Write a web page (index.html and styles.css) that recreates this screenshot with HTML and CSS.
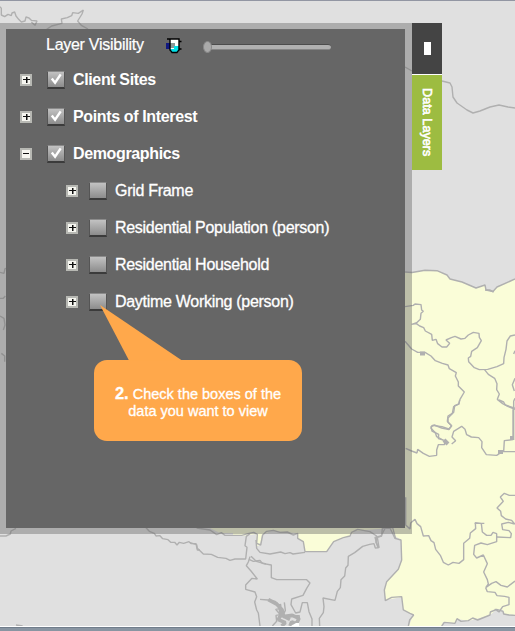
FILE: index.html
```html
<!DOCTYPE html>
<html lang="en">
<head>
<meta charset="utf-8">
<title>Data Layers</title>
<link rel="stylesheet" href="styles.css">
</head>
<body>
<svg class="map" viewBox="0 0 515 631" width="515" height="631">
  <g class="land">
    <path d="M405 272L412 272.5L425 270.3L437 270.7L447 275L450 279L462 282L476 288L485 285L486 290L493 291.5L497 287L515 279V615L505 614L503 610L497 609L490 615L480 618L468 621L458 619L455 623L443 622L442 626H409L413 615L403 610L402 597L386 600L384 590L387 581L398 570L402 560L401 540L395 536L390 528L355 531L350 536L333 542L327 551H305L303 542L298 538L296 533L271 531L262 535L260 545L257 546L256 534L242 536L233 535V533L220 533L210 528V500H405Z"/>
  </g>
  <g class="borders">
    <path d="M405 272L412 272.5L425 270.3L437 270.7L447 275L450 279L462 282L476 288L485 285L486 290L493 291.5L497 287L515 279"/>
    <path d="M442 81L450 83L452 87L453 97L457 103L467 110L473 113L480 111L490 107L499 105L508 107L515 108M405 67L412 71"/>
    <g transform="scale(.33333)">
      <path d="M0 20L4 25L4 45L14 50L24 43L34 47L36 39L44 36L48 48L56 58L64 66L75 63L78 51L87 54L94 61L111 63L105 76L94 66M140 88L155 78L186 70L184 57L202 53L215 47L218 38L235 40L250 30L246 42L233 63L244 76L264 87"/>
      <path d="M1315 1560M1315 1584M0 1608H18L31 1602L33 1593L48 1585M1 1608M438 1583L448 1594L463 1600L468 1608L480 1607L488 1616L504 1619L512 1627L524 1627L531 1635L538 1627L551 1630L567 1625L574 1631L588 1631L592 1650H600M48 1875L68 1878M0 817L12 820L15 806L19 805M0 895H10L16 888M0 948L12 955L15 975L10 990M4 1060L14 1068V1085"/>
    </g>
    <g transform="translate(405 290) scale(.33333)">
      <path d="M0 50L25 46L30 42L48 44L50 60L55 64L48 70L46 88L35 98L20 103L34 101L44 108L56 113L61 123L80 133L82 151L93 148L98 161L111 171L125 171L134 160L123 150L139 143L150 139L168 147L180 145L190 135L205 127L222 130L223 142L229 152L217 173L200 184L197 199L190 204L191 215L208 233L223 239L248 238L276 230L296 221L297 203L303 178L306 153L316 138L330 135"/>
      <path d="M0 154L20 177L38 187H60L78 198L91 212L112 220L129 225L133 236L154 248L151 258L160 276V288L178 306L165 328L161 342L146 350L142 370L129 378L127 394L140 408L131 417L111 410L82 406L78 415L91 428L95 440L114 450"/>
      <path d="M238 238L250 253L269 265L276 281L275 299L283 312L277 328L293 341L310 350L330 358M330 182L326 192M330 265L322 284L328 303M330 325L326 334L326 450"/>
      <path d="M240 0H254L266 6"/>
    </g>
    <g transform="translate(375 400) scale(.33333)">
      <path d="M254 0L252 12L239 17L236 37L219 54L219 67L230 77L222 89L200 84L178 75L168 80L171 93L191 103L190 116L208 121L209 134H190L185 150V166L163 169L145 160L128 148L126 159L110 153L92 145"/>
      <path d="M230 132L242 122L231 111L236 94L260 79L270 88L275 104L289 111L311 113L321 125L320 143L334 164L365 166L382 155L420 155M372 0L386 6L391 15L420 25M414 28V119L388 122L386 155"/>
      <path d="M92 292V375L105 387L107 369L120 358L126 371L137 380L145 408L161 407L168 422L177 428L182 448L196 466L205 487L220 495L234 487L252 490L266 479V430L284 415L286 399L302 386L301 368L319 371L322 396L335 406H348L354 397L365 401V425L337 434L318 429L299 436L296 463L305 474L325 465L337 491L326 516L337 539L340 552L332 563L350 550L363 545L378 556L397 561L420 543"/>
      <path d="M420 286H403L388 280L376 291L385 304L366 324L377 334L379 347L392 357L410 361L419 372L400 367L380 372L383 389L402 392L409 401L407 413L366 411M299 370H328"/>
      <path d="M45 384L60 415L78 420L80 480L70 508L35 545L28 570L31 602L50 592L80 590L85 630L105 640L116 645L104 660L100 678M200 678L208 667L240 670L246 656L258 664L280 662L293 654L308 660L345 645L346 636L365 628L384 634L386 642L402 645L420 646M332 563L337 575L360 577L366 587L389 589L402 592V614L383 620L372 636L359 627"/>
      <path d="M45 385L31 384L18 408L0 412L9 444"/>
    </g>
    <g transform="translate(190 500) scale(.33333)">
      <path d="M20 84L60 90L80 104L94 98L105 106H155L174 101L191 97L202 103L200 130L212 135L218 105L230 94L250 91L270 97L292 96L310 105L323 100V115L340 125L345 155L410 155L431 125L460 113L480 108L485 97L503 88L540 95L560 108L558 128L567 143L556 144L552 131L539 133L518 139L494 158L475 169L474 196L467 204L464 228L453 239L451 263L442 274L435 301L399 294L402 320L400 338L388 355L389 378"/>
      <path d="M0 128L20 134L22 145L40 162L64 163L83 172L108 175L120 181L135 177H167L171 142L165 137L169 109L180 101M198 120L200 145L210 157L240 162L272 156L285 161L300 158L309 162L345 157M180 170L175 186L169 197L183 213L202 237L186 235L167 255V268L195 276L200 290L194 306L200 330L205 339L210 378"/>
      <path d="M177 178L190 184L210 181L217 190L244 195V233L260 239L350 239L360 249L350 265L339 286L305 297L303 314L317 339L330 336L337 308H352L357 335L366 357V378M210 298L234 300L255 304L265 314L270 326L257 328L271 344L258 346L260 364L247 378M283 307L286 331L279 346L328 347L324 370M567 143L562 112L575 108L577 85L608 83L617 117"/>
      <path class="delta" d="M235 299L260 312L276 329L280 350L307 346L327 355L319 372L305 366L300 378M275 340L265 359L286 368L275 378M268 312L274 345L300 358"/>
      <path d="M183 169L199 184L228 192"/>
    </g>
    <path class="knot" d="M420 353.500h5M444 440l4 4M498 452h5M512 436v4"/>
  </g>
  <path class="water" d="M291 626l5-3h3v3z"/>
</svg>
<div class="top-line"></div>
<main class="drawer">
  <section class="panel">
    <header class="visibility">
      <span class="label">Layer Visibility</span>
      <svg class="beaker" width="17" height="16" viewBox="0 0 17 16">
        <path fill="#101880" d="M0 5h4v6H0z"/>
        <path fill="#fff" d="M4 1h9v12l-2 2H6l-2-2z"/>
        <path fill="#8a9a9a" d="M4 5h5v5H4z"/>
        <path fill="#00e0e8" d="M8 8h5v5l-2 2H6l-2-2v-2h4z"/>
        <path fill="none" stroke="#000" stroke-width="1.4" d="M1 1h3v11l2 2.500h5l2-2.500V1H4M13 3.500h2.500M13 11h2.500"/>
      </svg>
      <div class="slider"><span class="thumb"></span></div>
    </header>
    <ul class="tree">
      <li class="row"><i class="expander plus"></i><i class="box"><svg viewBox="0 0 16 16"><path d="M3.500 7l3.500 4.500L13 2.500"/></svg></i><b class="name">Client Sites</b></li>
      <li class="row"><i class="expander plus"></i><i class="box"><svg viewBox="0 0 16 16"><path d="M3.500 7l3.500 4.500L13 2.500"/></svg></i><b class="name">Points of Interest</b></li>
      <li class="row"><i class="expander"></i><i class="box"><svg viewBox="0 0 16 16"><path d="M3.500 7l3.500 4.500L13 2.500"/></svg></i><b class="name">Demographics</b></li>
      <li class="row child"><i class="expander plus"></i><i class="box"></i><span class="name">Grid Frame</span></li>
      <li class="row child"><i class="expander plus"></i><i class="box"></i><span class="name">Residential Population (person)</span></li>
      <li class="row child"><i class="expander plus"></i><i class="box"></i><span class="name">Residential Household</span></li>
      <li class="row child"><i class="expander plus"></i><i class="box"></i><span class="name">Daytime Working (person)</span></li>
    </ul>
  </section>
  <aside class="tabs">
    <div class="tab-toggle"><span></span></div>
    <div class="tab-layers"><span>Data Layers</span></div>
  </aside>
</main>
<div class="callout">
  <svg class="pointer" width="84" height="57" viewBox="0 0 84 57"><path d="M0 0L82 55.500H29z"/></svg>
  <p><strong>2.</strong> Check the boxes of the<br>data you want to view</p>
</div>
<div class="bottom-line"></div>
</body>
</html>
```
FILE: styles.css
```css
* { box-sizing: border-box; }
body {
  margin: 0;
  width: 515px;
  height: 631px;
  overflow: hidden;
  position: relative;
  background: #e0e0e0;
  font-family: "Liberation Sans", Arial, sans-serif;
  color: #fff;
}
.map { position: absolute; left: 0; top: 0; }
.land { fill: #fafdd8; }
.borders { fill: none; stroke: #b0b0b0; stroke-width: 1.4; stroke-linejoin: bevel; }
.borders g { stroke-width: 4.2; }
.borders .delta { stroke-width: 11; }
.borders .knot { stroke-width: 4; }
.water { fill: #fff; }
.top-line { position: absolute; left: 0; top: 0; width: 515px; height: 1px; background: #9296a3; }
.bottom-line {
  position: absolute;
  left: 0;
  bottom: 0;
  width: 515px;
  height: 5px;
  background: #8995a2;
  border-top: 1px solid #fff;
  box-shadow: inset 0 1px #717d8b;
}
.drawer { position: relative; display: flex; align-items: flex-start; padding-top: 23px; }
.panel {
  width: 412px;
  height: 511px;
  border: solid rgba(102, 102, 102, .42);
  border-width: 6px 7px 6px 6px;
  background: #666;
  background-clip: padding-box;
}
.visibility { display: flex; align-items: center; height: 32px; padding-left: 40px; }
.label { width: 120px; font-size: 16px; letter-spacing: -.27px; white-space: nowrap; -webkit-text-stroke: .2px #fff; }
.beaker { margin-right: 22px; margin-top: 2px; }
.slider {
  position: relative;
  width: 125px;
  height: 6px;
  margin-top: 4px;
  margin-left: 1px;
  border-radius: 3px;
  background: #b0b0b0;
  border-top: 1px solid #4c4c4c;
  border-bottom: 1px solid #858585;
}
.thumb {
  position: absolute;
  left: -3px;
  top: -4px;
  width: 9px;
  height: 12px;
  border-radius: 50%;
  background: #aaa;
  border: 1px solid #888;
}
.tree { list-style: none; margin: 0; padding: 0; }
.row { display: flex; align-items: center; height: 37px; padding-left: 14px; }
.row.child { padding-left: 60px; }
.expander {
  width: 12px;
  height: 12px;
  margin-right: 15px;
  border: 2px solid #b7b8b3;
  background: linear-gradient(#111, #111) 1px 3px / 6px 1px no-repeat #f6f6f0;
}
.plus {
  background: linear-gradient(#111, #111) 1px 3px / 7px 1px no-repeat, linear-gradient(#111, #111) 3.500px 1px / 1.500px 6px no-repeat #f6f6f0;
}
.box {
  width: 18px;
  height: 18px;
  margin-right: 8px;
  background: linear-gradient(#c2c2c2, #8c8c8c);
  border: 1px solid #555;
  border-bottom: 2px solid #3b3b3b;
  border-top-color: #8b8b8b;
}
.child .expander { margin-right: 11px; }
.box svg { display: block; width: 16px; height: 15px; }
.box path { fill: none; stroke: #fff; stroke-width: 2.600; }
.name { font-size: 16px; letter-spacing: -.36px; white-space: nowrap; }
.child .name { letter-spacing: -.29px; -webkit-text-stroke: .3px #fff; }
.tabs { width: 30px; }
.tab-toggle {
  display: flex;
  align-items: center;
  justify-content: center;
  height: 52px;
  background: #444;
  border-bottom: 1px solid #fff;
}
.tab-toggle span { width: 7px; height: 13px; background: #fff; }
.tab-layers {
  display: flex;
  align-items: center;
  justify-content: center;
  height: 95px;
  background: #9dbc41;
}
.tab-layers span { writing-mode: vertical-rl; font-size: 12.700px; -webkit-text-stroke: .6px #fff; white-space: nowrap; }
.callout {
  position: absolute;
  left: 94px;
  top: 360px;
  width: 208px;
  height: 81px;
  display: flex;
  align-items: center;
  justify-content: center;
  border-radius: 13px;
  background: #ffa84b;
  text-align: center;
}
.callout p { margin: 3px 0 0; font-size: 14.500px; line-height: 17px; white-space: nowrap; -webkit-text-stroke: .3px #fff; }
.callout strong { font-size: 16.500px; line-height: 1; }
.pointer { position: absolute; left: 6px; top: -55px; fill: #ffa84b; }
```
